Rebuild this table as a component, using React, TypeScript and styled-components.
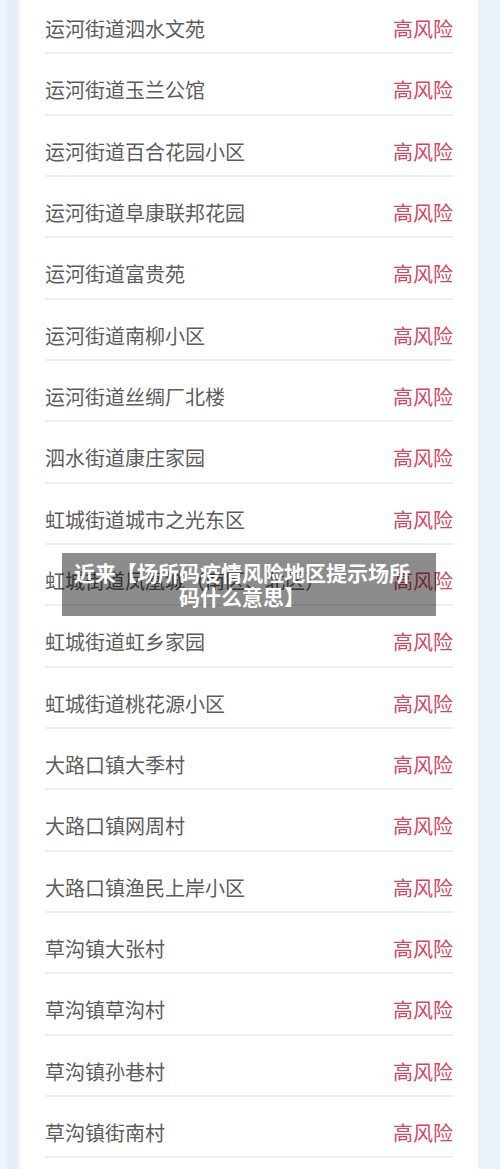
import React from 'react';
import styled, { createGlobalStyle } from 'styled-components';

const GlobalStyle = createGlobalStyle`
  html, body {
    margin: 0;
    padding: 0;
    background: #e8f1f9;
    overflow: hidden;
  }
  body {
    font-family: "Noto Sans CJK SC", "Noto Sans", sans-serif;
  }
`;

const Page = styled.div`
  position: relative;
  width: 500px;
  height: 1169px;
  overflow: hidden;
  display: flex;
  background: linear-gradient(
    to right,
    #edf4fb 0px,
    #edf4fb 6px,
    #e3eef8 7px,
    #e3eef8 16px,
    #eaf3fa 17px
  );
`;

const Card = styled.div`
  margin-left: 19px;
  width: 459px;
  background: #ffffff;
  display: flex;
  flex-direction: column;
`;

const List = styled.div`
  margin-top: -7px;
  padding: 0 25px 0 26px;
  display: flex;
  flex-direction: column;
`;

const Row = styled.div`
  box-sizing: border-box;
  height: 61.33px;
  padding-top: 26px;
  border-bottom: 2px solid #efefef;
  display: flex;
  justify-content: space-between;
  align-items: flex-start;
  font-size: 20px;
  line-height: 20px;
`;

const Place = styled.span`
  color: #5c5c5c;
  white-space: nowrap;
`;

const Risk = styled.span`
  color: #d4475d;
`;

const Caption = styled.div`
  position: absolute;
  left: 62px;
  top: 553px;
  width: 374px;
  height: 63px;
  box-sizing: border-box;
  padding: 7px 23px 8px 9px;
  background: rgba(0, 0, 0, 0.45);
  color: #ffffff;
  font-size: 21px;
  line-height: 24px;
  font-weight: 700;
  text-align: center;
`;

const places = [
  '运河街道泗水文苑',
  '运河街道玉兰公馆',
  '运河街道百合花园小区',
  '运河街道阜康联邦花园',
  '运河街道富贵苑',
  '运河街道南柳小区',
  '运河街道丝绸厂北楼',
  '泗水街道康庄家园',
  '虹城街道城市之光东区',
  '虹城街道凤凰城（南区、北区）',
  '虹城街道虹乡家园',
  '虹城街道桃花源小区',
  '大路口镇大季村',
  '大路口镇网周村',
  '大路口镇渔民上岸小区',
  '草沟镇大张村',
  '草沟镇草沟村',
  '草沟镇孙巷村',
  '草沟镇街南村',
];

const App: React.FC = () => {
  return (
    <>
      <GlobalStyle />
      <Page>
        <Card>
          <List>
            {places.map((name) => (
              <Row key={name}>
                <Place>{name}</Place>
                <Risk>高风险</Risk>
              </Row>
            ))}
          </List>
        </Card>
        <Caption>近来【场所码疫情风险地区提示场所码什么意思】</Caption>
      </Page>
    </>
  );
};

export default App;
